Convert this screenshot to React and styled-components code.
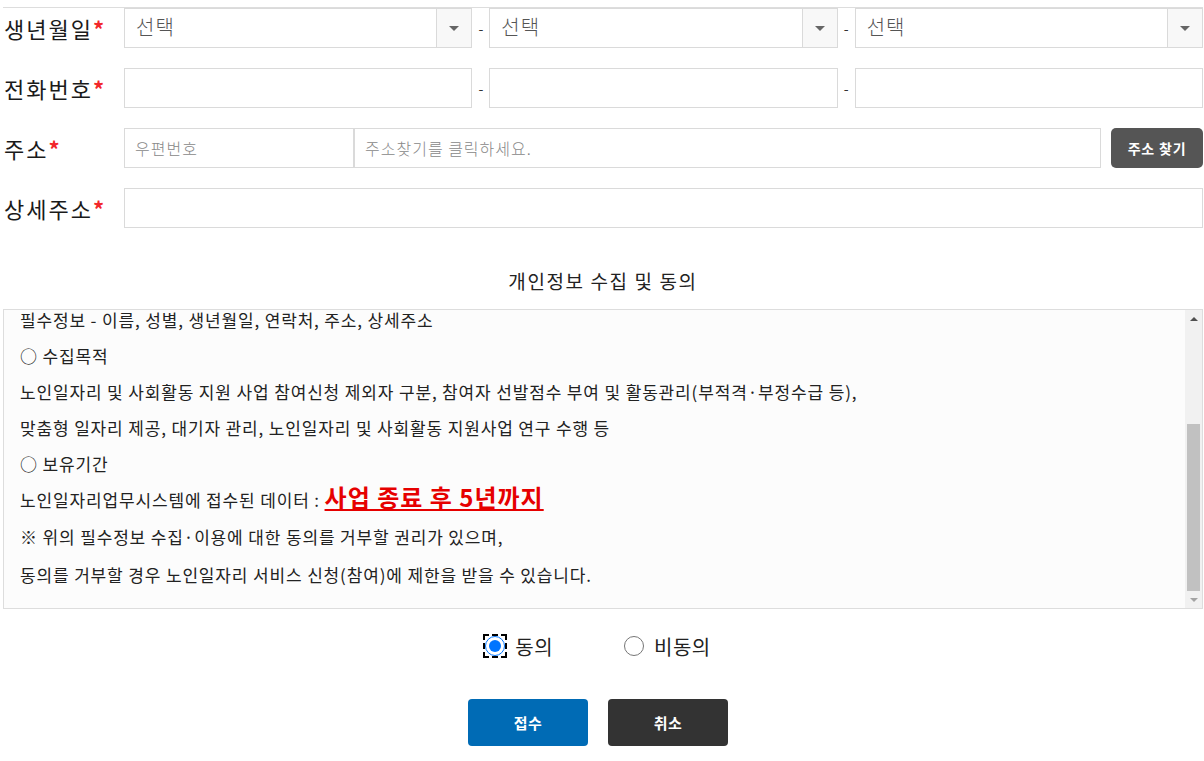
import React, {useRef, useLayoutEffect, useState} from 'react'
import styled, {createGlobalStyle} from 'styled-components'

const GlobalStyle = createGlobalStyle`
  body {
    margin: 0;
    background: #fff;
    font-family: "Noto Sans CJK KR", "Noto Sans", sans-serif;
    color: #222;
  }
`

const Page = styled.div`
  width: 1200px;
  padding-left: 3px;
  padding-top: 7px;
`

const Form = styled.div`
  border-top: 1px solid #dddddd;
  display: flex;
  flex-direction: column;
  gap: 20px;
`

const Row = styled.div`
  display: flex;
  align-items: center;
  height: 40px;
`

const Label = styled.div`
  width: 120px;
  flex-shrink: 0;
  font-size: 22px;
  font-weight: 400;
  color: #1a1a1a;
  padding-left: 1px;
  letter-spacing: 2px;
  white-space: nowrap;
  span {
    color: #f2262a;
    font-weight: 700;
  }
`

const Triple = styled.div`
  flex: 1;
  display: grid;
  grid-template-columns: 1fr 17px 1fr 17px 1fr;
  align-items: center;
  height: 40px;
`

const Dash = styled.span`
  text-align: center;
  font-size: 14px;
  color: #333;
`

const SelectBox = styled.div`
  display: flex;
  height: 40px;
  box-sizing: border-box;
  border: 1px solid #dadada;
  background: #fff;
`

const SelectText = styled.div`
  flex: 1;
  padding-left: 11px;
  font-size: 20px;
  font-weight: 300;
  color: #555;
  line-height: 36px;
  letter-spacing: 1px;
`

const Arrow = styled.div`
  width: 34px;
  border-left: 1px solid #dadada;
  background: #f8f8f8;
  display: flex;
  align-items: center;
  justify-content: center;
  &:after {
    content: '';
    border-left: 5px solid transparent;
    border-right: 5px solid transparent;
    border-top: 5px solid #666;
  }
`

const Input = styled.input`
  box-sizing: border-box;
  height: 40px;
  width: ${p => p.$w || '100%'};
  flex: ${p => p.$grow ? 1 : 'none'};
  border: 1px solid #dadada;
  outline: none;
  padding: 0 10px;
  font-family: inherit;
  font-size: 16px;
  font-weight: 300;
  letter-spacing: 1px;
  color: #333;
  &::placeholder {
    color: #888;
  }
`

const AddrGroup = styled.div`
  flex: 1;
  display: flex;
  align-items: center;
`

const FindButton = styled.button`
  margin-left: 10px;
  width: 92px;
  height: 40px;
  border: none;
  border-radius: 5px;
  background: #555;
  color: #fff;
  font-family: inherit;
  font-size: 14px;
  font-weight: 700;
  letter-spacing: 0.8px;
`

const Title = styled.h3`
  margin: 40px 0 15px;
  text-align: center;
  font-size: 19px;
  font-weight: 400;
  line-height: 26px;
  letter-spacing: 1.6px;
  color: #222;
`

const TermsBox = styled.div`
  box-sizing: border-box;
  height: 300px;
  display: flex;
  border: 1px solid #dddddd;
  background: #fcfcfc;
`

const TermsContent = styled.div`
  flex: 1;
  overflow: hidden;
  padding: 20px 0 14px 16px;
`

const ScrollBar = styled.div`
  width: 17px;
  flex-shrink: 0;
  display: flex;
  flex-direction: column;
  background: #f1f1f1;
`

const ScrollBtn = styled.div`
  height: 17px;
  flex-shrink: 0;
  display: flex;
  align-items: center;
  justify-content: center;
  &:after {
    content: '';
    border-left: 4px solid transparent;
    border-right: 4px solid transparent;
    ${p => p.$down
      ? 'border-top: 4px solid #a3a3a3;'
      : 'border-bottom: 4px solid #505050;'}
  }
`

const ScrollTrack = styled.div`
  flex: 1;
  display: flex;
  flex-direction: column;
  justify-content: flex-end;
  padding: 0 2px;
`

const Thumb = styled.div`
  background: #c1c1c1;
`

const Line = styled.p`
  margin: 0;
  font-size: 17px;
  letter-spacing: 0.85px;
  line-height: ${p => p.$tall ? '38px' : '36px'};
  color: #222;
  white-space: nowrap;
`

const Emph = styled.span`
  font-size: 24px;
  font-weight: 700;
  letter-spacing: 1px;
  color: #e60000;
  text-decoration: underline;
  line-height: 1;
`

const RadioRow = styled.div`
  margin-top: 17px;
  height: 40px;
  display: flex;
  align-items: center;
  justify-content: center;
  gap: 71px;
  padding-right: 10px;
`

const RadioLabel = styled.label`
  display: flex;
  align-items: center;
  gap: 10px;
  font-size: 20px;
  letter-spacing: 0.5px;
  color: #222;
`

const Radio = styled.input`
  width: 20px;
  height: 20px;
  margin: 0;
  accent-color: #0075ff;
  outline: ${p => p.$focus ? '2px dashed #000' : 'none'};
  outline-offset: 0;
`

const ButtonRow = styled.div`
  margin-top: 33px;
  display: flex;
  justify-content: center;
  gap: 20px;
  padding-right: 10px;
`

const ActionButton = styled.button`
  width: 120px;
  height: 47px;
  border: none;
  border-radius: 4px;
  background: ${p => p.$dark ? '#333333' : '#006bb5'};
  color: #fff;
  font-family: inherit;
  font-size: 15px;
  font-weight: 700;
  letter-spacing: 0.5px;
`

const Select = () => (
  <SelectBox>
    <SelectText>선택</SelectText>
    <Arrow />
  </SelectBox>
)

const App = () => {
  const boxRef = useRef(null)
  const [agree, setAgree] = useState(true)
  const [thumb, setThumb] = useState(169)

  useLayoutEffect(() => {
    const el = boxRef.current
    if (!el) return
    el.scrollTop = el.scrollHeight
    const track = el.clientHeight - 34
    setThumb(Math.round(track * el.clientHeight / el.scrollHeight))
  }, [])

  return (
    <Page>
      <GlobalStyle />
      <Form>
        <Row>
          <Label>생년월일<span>*</span></Label>
          <Triple>
            <Select />
            <Dash>-</Dash>
            <Select />
            <Dash>-</Dash>
            <Select />
          </Triple>
        </Row>
        <Row>
          <Label>전화번호<span>*</span></Label>
          <Triple>
            <Input />
            <Dash>-</Dash>
            <Input />
            <Dash>-</Dash>
            <Input />
          </Triple>
        </Row>
        <Row>
          <Label>주소<span>*</span></Label>
          <AddrGroup>
            <Input $w="230px" placeholder="우편번호" readOnly />
            <Input $grow placeholder="주소찾기를 클릭하세요." readOnly />
            <FindButton>주소 찾기</FindButton>
          </AddrGroup>
        </Row>
        <Row>
          <Label>상세주소<span>*</span></Label>
          <AddrGroup>
            <Input $grow />
          </AddrGroup>
        </Row>
      </Form>

      <Title>개인정보 수집 및 동의</Title>
      <TermsBox>
        <TermsContent ref={boxRef}>
          <Line>노인일자리 및 사회활동 지원사업 참여신청을 위하여 아래와 같이 개인정보를 수집·이용합니다.</Line>
          <Line>○ 수집·이용 기관</Line>
          <Line>한국노인인력개발원 및 수행기관</Line>
          <Line>○ 수집항목</Line>
          <Line>필수정보 - 이름, 성별, 생년월일, 연락처, 주소, 상세주소</Line>
          <Line>○ 수집목적</Line>
          <Line>노인일자리 및 사회활동 지원 사업 참여신청 제외자 구분, 참여자 선발점수 부여 및 활동관리(부적격·부정수급 등),</Line>
          <Line>맞춤형 일자리 제공, 대기자 관리, 노인일자리 및 사회활동 지원사업 연구 수행 등</Line>
          <Line>○ 보유기간</Line>
          <Line>노인일자리업무시스템에 접수된 데이터 : <Emph>사업 종료 후 5년까지</Emph></Line>
          <Line $tall>※ 위의 필수정보 수집·이용에 대한 동의를 거부할 권리가 있으며,</Line>
          <Line $tall>동의를 거부할 경우 노인일자리 서비스 신청(참여)에 제한을 받을 수 있습니다.</Line>
        </TermsContent>
        <ScrollBar>
          <ScrollBtn />
          <ScrollTrack>
            <Thumb style={{height: thumb}} />
          </ScrollTrack>
          <ScrollBtn $down />
        </ScrollBar>
      </TermsBox>

      <RadioRow>
        <RadioLabel>
          <Radio type="radio" name="agree" $focus checked={agree} onChange={() => setAgree(true)} />
          동의
        </RadioLabel>
        <RadioLabel>
          <Radio type="radio" name="agree" checked={!agree} onChange={() => setAgree(false)} />
          비동의
        </RadioLabel>
      </RadioRow>

      <ButtonRow>
        <ActionButton>접수</ActionButton>
        <ActionButton $dark>취소</ActionButton>
      </ButtonRow>
    </Page>
  )
}

export default App
